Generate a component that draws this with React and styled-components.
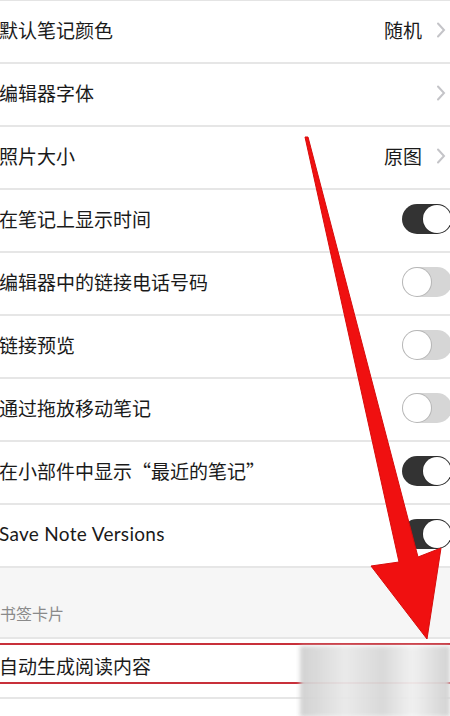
import React from "react";
import styled, { createGlobalStyle } from "styled-components";

const GlobalStyle = createGlobalStyle`
  html, body { margin: 0; padding: 0; background: #ffffff; }
  body { font-family: "Noto Sans CJK SC", "Noto Sans", sans-serif; }
`;

const Page = styled.div`
  position: relative;
  width: 450px;
  height: 716px;
  overflow: hidden;
  background: #ffffff;
  border-top: 1px solid #e4e4e4;
  box-sizing: border-box;
`;

const Row = styled.div`
  display: flex;
  align-items: center;
  height: ${(p) => p.h || 63}px;
  box-sizing: border-box;
  border-bottom: 2px solid #e6e6e6;
  background: #ffffff;
  padding-right: 4px;
  padding-bottom: ${(p) => p.pb ?? 4}px;
  position: relative;
`;

const Label = styled.span`
  flex: 1;
  font-size: 19px;
  color: #1a1a1a;
  margin-left: -1px;
  white-space: nowrap;
  font-family: ${(p) => (p.latin ? `"Lato", "Noto Sans", sans-serif` : `"Noto Sans CJK SC", sans-serif`)};
  letter-spacing: ${(p) => (p.latin ? "0.3px" : "0")};
`;

const Value = styled.span`
  font-size: 19px;
  color: #1a1a1a;
  margin-right: 14px;
`;

const Chevron = () => (
  <svg width="10" height="16" viewBox="0 0 10 16">
    <path d="M2 1.5 L8 8 L2 14.5" fill="none" stroke="#c4c4c8" strokeWidth="2" strokeLinecap="round" />
  </svg>
);

const Track = styled.div`
  width: 50px;
  height: 30px;
  border-radius: 15px;
  margin-right: -6px;
  box-sizing: border-box;
  background: ${(p) => (p.on ? "#333333" : "#d6d6d6")};
  display: flex;
  justify-content: ${(p) => (p.on ? "flex-end" : "flex-start")};
  align-items: center;
  padding: 1px;
`;

const Knob = styled.div`
  width: 28px;
  height: 28px;
  border-radius: 50%;
  background: #ffffff;
  box-shadow: 0 0 0 1px rgba(0, 0, 0, 0.15);
`;

const Toggle = ({ on }) => (
  <Track on={on ? 1 : 0}>
    <Knob />
  </Track>
);

const Section = styled.div`
  height: 69px;
  background: #f6f6f6;
  border-bottom: 2px solid #e6e6e6;
  box-sizing: content-box;
  display: flex;
  align-items: flex-end;
`;

const SectionTitle = styled.span`
  font-size: 16px;
  color: #8a8a8a;
  margin-left: 0;
  margin-bottom: 12px;
`;

const Highlight = styled.div`
  position: absolute;
  left: -2px;
  right: -4px;
  top: 4px;
  height: 41px;
  border-top: 2px solid #c8303a;
  border-bottom: 2px solid #c8303a;
  box-sizing: border-box;
`;

const Watermark = styled.div`
  position: absolute;
  left: 300px;
  top: 645px;
  width: 150px;
  height: 71px;
  background:
    linear-gradient(90deg, #cfcfcf 0%, #e9e9e9 30%, #d8d8d8 55%, #f0f0f0 75%, #d0d0d0 100%);
  filter: blur(2px);
  opacity: 0.95;
`;

const Arrow = styled.svg`
  position: absolute;
  left: 0;
  top: 0;
  pointer-events: none;
`;

const rows = [
  { label: "默认笔记颜色", value: "随机", chevron: true },
  { label: "编辑器字体", chevron: true },
  { label: "照片大小", value: "原图", chevron: true },
  { label: "在笔记上显示时间", toggle: true, on: true },
  { label: "编辑器中的链接电话号码", toggle: true },
  { label: "链接预览", toggle: true },
  { label: "通过拖放移动笔记", toggle: true },
  { label: "在小部件中显示“最近的笔记”", toggle: true, on: true },
  { label: "Save Note Versions", toggle: true, on: true, latin: true },
];

export default function App() {
  return (
    <>
      <GlobalStyle />
      <Page>
        {rows.map((r) => (
          <Row key={r.label}>
            <Label latin={r.latin ? 1 : 0}>{r.label}</Label>
            {r.value && <Value>{r.value}</Value>}
            {r.chevron && <Chevron />}
            {r.toggle && <Toggle on={r.on} />}
          </Row>
        ))}
        <Section>
          <SectionTitle>书签卡片</SectionTitle>
        </Section>
        <Row h={60} pb={6}>
          <Label>自动生成阅读内容</Label>
          <Highlight />
        </Row>
        <Row h={40} />
        <Watermark />
        <Arrow width="450" height="716" viewBox="0 0 450 716">
          <polygon
            points="305,136 308,136 418,556 441,547 427,638 371,565 399,561"
            fill="#f01010"
            stroke="#d80c0c"
            strokeWidth="1"
            strokeLinejoin="round"
          />
        </Arrow>
      </Page>
    </>
  );
}
